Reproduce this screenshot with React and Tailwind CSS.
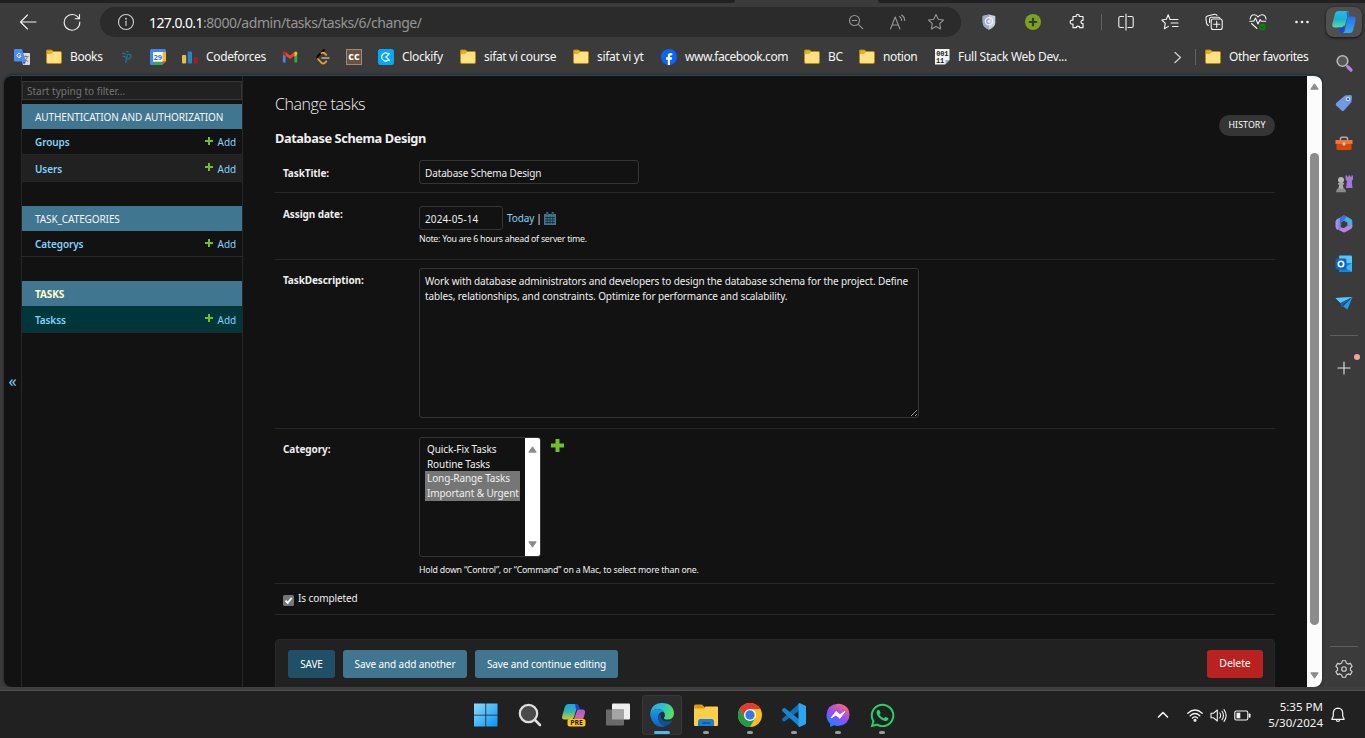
import React from "react";
import { FaWhatsapp } from "react-icons/fa";

const stroke = { fill: "none", stroke: "currentColor", strokeLinecap: "round", strokeLinejoin: "round" };

function Icon({ size = 18, vb = 18, className = "", children, sw = 1.1 }) {
  return (
    <svg width={size} height={size} viewBox={`0 0 ${vb} ${vb}`} className={`shrink-0 ${className}`} {...stroke} strokeWidth={sw}>
      {children}
    </svg>
  );
}

function Folder() {
  return (
    <svg width="16" height="16" viewBox="0 0 16 16" className="shrink-0">
      <path d="M.5 3V2q0-1 1-1h4l1.500 1.500H14q1.500 0 1.500 1.200V13q0 1.500-1.500 1.500H2Q.5 14.500.5 13z" fill="#ffe083" stroke="#b58a12" />
      <path d="M1 2.500Q1 1.500 2 1.500h3.300L6.600 2.700 5.300 4.300H1z" fill="#eeb81f" stroke="#b58a12" strokeWidth=".6" />
    </svg>
  );
}

/* ---------- browser toolbar ---------- */

function Slot({ children, className = "w-11" }) {
  return <div className={`flex shrink-0 items-center justify-center ${className}`}>{children}</div>;
}

function Toolbar() {
  return (
    <div className="flex h-9 shrink-0 items-center pt-[2px] text-[#f2f2f2]">
      <Slot className="ml-[6px] w-11">
        <Icon><path d="M17 9H1.500M8.500 2 1.500 9l7 7" /></Icon>
      </Slot>
      <Slot>
        <Icon><path d="M15.800 5.500A7.800 7.800 0 1 0 16.800 9M16.500 1.500v4.200h-4.300" /></Icon>
      </Slot>
      <div className="ml-[6px] flex h-[30px] w-[861px] items-center rounded-full bg-[#2b2b2b] pl-[17px]">
        <Icon className="text-[#cfcfcf]">
          <circle cx="9" cy="9" r="7.500" />
          <path d="M9 8.300v4.200" />
          <circle cx="9" cy="5.800" r=".4" />
        </Icon>
        <div className="ml-[14px] w-[679px] whitespace-pre text-[14px] tracking-[-0.43px] text-[#969696]">
          <span className="tracking-[-0.6px] text-white">127.0.0.1</span>:8000/admin/tasks/tasks/6/change/
        </div>
        <Slot className="ml-[6px] w-[44px] text-[#969696]">
          <Icon size={16} vb={16}><circle cx="6.500" cy="6.500" r="5" /><path d="M4.200 6.500h4.600M10.300 10.300l4.400 4.400" /></Icon>
        </Slot>
        <Slot className="w-[39px] text-[#969696]">
          <Icon size={17} vb={17}><path d="M1.500 15 6.200 3l4.700 12M3 11h6.500M10.500 2.500q2 1 2.200 4M12.500 1q3 1.500 3.200 5.500" /></Icon>
        </Slot>
        <Slot className="w-[38px] text-[#969696]">
          <Icon><path d="m9 1.500 2.300 4.800 5.200.7-3.800 3.700.9 5.200L9 13.400l-4.600 2.500.9-5.200L1.500 7l5.200-.7z" /></Icon>
        </Slot>
      </div>
      <Slot className="ml-[6px] w-11">
        <svg width="14" height="16" viewBox="0 0 14 16">
          <path d="M7 .5 13.300 2v6.500q0 4.500-6.300 7.300Q.7 13 .7 8.500V2z" fill="#c7cfe0" />
          <path d="M7 .5V15.800Q.7 13 .7 8.500V2z" fill="#9faac3" />
          <circle cx="7" cy="7.300" r="3.600" fill="none" stroke="#eef1f8" strokeWidth="1.300" />
          <circle cx="7" cy="7.300" r="1.500" fill="#e8ecf5" />
        </svg>
      </Slot>
      <Slot>
        <svg width="16" height="16" viewBox="0 0 16 16">
          <circle cx="8" cy="8" r="8" fill="#7ba223" />
          <path d="M8 3.800v8.400M3.800 8h8.400" stroke="#30400c" strokeWidth="2.200" />
        </svg>
      </Slot>
      <Slot>
        <Icon size={16} vb={16} sw={1.2}>
          <path d="M5 2.500h2.200q-.3-2 1.500-2t1.500 2H14v4q-2-.3-2 1.500t2 1.500v4.200h-3.500q.2-1.600-1.500-1.600t-1.500 1.600H4v-3.700q-2.800.3-2.800-2T4 6.200V2.500z" />
        </Icon>
      </Slot>
      <div className="mx-[2px] h-4 w-px bg-[#626262]" />
      <Slot>
        <Icon><path d="M6.500 3.500h-3Q1.800 3.500 1.800 5v8q0 1.500 1.700 1.500h3M11 3.500h3.500q1.700 0 1.700 1.500v8q0 1.500-1.700 1.500H11M9 1v16" /></Icon>
      </Slot>
      <Slot>
        <Icon>
          <path d="M10.500 6.500H9L7.200 1.800 5.300 6.300.8 7l3.500 3.400L3.400 15.800l4-2.400M11 6.500h6M10 10h7M11.500 13.500H17" />
        </Icon>
      </Slot>
      <Slot>
        <Icon>
          <path d="M3.500 12.500q-1.500-.5-1.900-2L.9 5.400Q.8 3.500 2.500 3l7-1.700q2-.2 2.500 1.200M4.600 9.500V6.200q0-2 2-2h6.600q1.700 0 1.900 1.600" />
          <rect x="6.200" y="6" width="11" height="10.500" rx="2" fill="#3b3b3b" />
          <path d="M11.700 8.200v6M8.700 11.200h6" />
        </Icon>
      </Slot>
      <Slot>
        <Icon>
          <path d="M1.200 6q.3-4.300 4-4.300Q7.700 1.700 9 4q1.400-2.300 4-2.300 3.600 0 4 4.300M2.500 10.500 8 15.500M.8 8.300h4L6.500 5 9 11l2.200-4.500 1 1.800h4.500" />
          <circle cx="13.500" cy="14" r="3.500" fill="#107c10" stroke="none" />
          <path d="m12 14 1.200 1.200 2-2.200" strokeWidth=".8" stroke="#064b06" />
        </Icon>
      </Slot>
      <Slot>
        <svg width="16" height="4" viewBox="0 0 16 4" fill="#f2f2f2">
          <circle cx="2.500" cy="2" r="1.300" /><circle cx="8" cy="2" r="1.300" /><circle cx="13.500" cy="2" r="1.300" />
        </svg>
      </Slot>
      <div className="ml-[2px] flex h-[30px] w-9 items-center justify-center rounded-lg bg-[#505050] shadow-[0_1px_3px_rgba(0,0,0,0.7)]">
        <svg width="26" height="24" viewBox="0 0 26 24">
          <defs>
            <linearGradient id="cpa" x1="0" y1="0" x2="0" y2="1"><stop stopColor="#2bb9e6" /><stop offset=".5" stopColor="#1cb0cf" /><stop offset="1" stopColor="#5ddc9a" /></linearGradient>
            <linearGradient id="cpb" x1="0" y1="0" x2="0" y2="1"><stop stopColor="#2870e8" /><stop offset="1" stopColor="#35a9f2" /></linearGradient>
          </defs>
          <path d="M7 1h9q2 0 1.500 2L14 15q-1 2.500-3.500 2.500H4q-3.500 0-2.500-4L4 3.500Q4.700 1 7 1z" fill="url(#cpa)" />
          <path d="M15.500 1.100q2 .3 3.400 5.400h-3z" fill="#1473c9" />
          <path d="M7 17.500h4l2-2-.5 7.500h-1Q9 22.800 7 17.500z" fill="#1548d8" />
          <path d="M16.500 6.500h5.500q3.500 0 2.500 4L22 20.500q-.8 2.500-3 2.500h-7q1.500-.5 2-3l2-11z" fill="url(#cpb)" />
        </svg>
      </div>
    </div>
  );
}

/* ---------- bookmarks ---------- */

function Mark({ icon, label, className }) {
  return (
    <div className={`flex shrink-0 items-center gap-2 whitespace-nowrap ${className}`}>
      {icon}
      {label && <span>{label}</span>}
    </div>
  );
}

const translateIcon = (
  <svg width="16" height="16" viewBox="0 0 16 16">
    <path d="M6 4h9q1 0 1 1v10q0 1-1 1H9z" fill="#dcdcdc" />
    <path d="M8.500 7.500h6M11.500 6.500v1M13.500 7.500q-.8 3-3.500 5M10 9q1 2.500 4 3.500" stroke="#70767c" fill="none" strokeWidth=".9" />
    <path d="M1 0h7l4 12.500H1q-1 0-1-1V1q0-1 1-1z" fill="#4c8bf5" />
    <path d="M6.700 5.300A2 2 0 1 0 7 7H5.200" stroke="#fff" fill="none" />
    <path d="m8.500 12.500 1.500 3.300 2-3.300z" fill="#2d5fc4" />
  </svg>
);
const pIcon = (
  <svg width="12" height="14" viewBox="0 0 12 14" fill="none" stroke="#23708f" strokeWidth="1.300">
    <path d="M1 3.500q2.500-.5 4 1M1.500 6.500q2-.5 3.500 1M4.500 13 6.500 4.500M6 5Q10.500 3.500 10 6.300 9.500 9 5.500 9.200M5 1.500q1.500-.5 2.500.8" />
  </svg>
);
const calendarIcon = (
  <svg width="16" height="16" viewBox="0 0 16 16">
    <path d="M1.500 0H14.500Q16 0 16 1.500V12l-4 4H1.500Q0 16 0 14.500v-13Q0 0 1.500 0z" fill="#4285f4" />
    <path d="M12.500 3H16v9.500h-3.500z" fill="#fbbc04" /><path d="M3 12.500h9.500V16H3z" fill="#34a853" />
    <path d="M12.500 12.500H16L12.500 16z" fill="#ea4335" /><path d="M3 3h9.700v9.700H3z" fill="#fff" />
    <text x="7.800" y="10.600" fontSize="7.500" fontWeight="700" textAnchor="middle" fill="#3674e0" fontFamily="Open Sans, sans-serif">29</text>
  </svg>
);
const barsIcon = (
  <svg width="16" height="16" viewBox="0 0 16 16">
    <rect x="0" y="6" width="4.200" height="8.500" rx="1" fill="#e8bd45" /><rect x="5.800" y="2.500" width="4.200" height="12" rx="1" fill="#1f86c9" /><rect x="11.700" y="8" width="4.200" height="6.500" rx="1" fill="#a9182a" />
  </svg>
);
const gmailIcon = (
  <svg width="16" height="12" viewBox="0 0 16 12">
    <path d="M1 1h2.600v10.500H1.500Q.8 11.500.8 10.700z" fill="#4285f4" /><path d="M12.400 1h2.800v9.700q0 .8-.8.800h-2z" fill="#34a853" />
    <path d="M.8 1.800Q1.300-.3 3.600 1L8 4.600 12.400 1v3.700L8 8.100 3.600 4.700.8 3.500z" fill="#ea4335" />
    <path d="M12.400 1q2.300-1.300 2.800.8v2l-2.800 2z" fill="#fbbc04" /><path d="M.8 1.800Q1.200.4 2.200.5l1.400.5v4.500L.8 3.500z" fill="#c5221f" />
  </svg>
);
const leetIcon = (
  <svg width="14" height="16" viewBox="0 0 14 16" fill="none" strokeLinecap="round" strokeWidth="1.800">
    <path d="M8 1 2 7q-1.500 1.500 0 3" stroke="#080808" /><path d="m2 10 3.500 3.800q1.700 1.500 3.300 0l1.500-1.500M5.500 4q1.700-.8 3 .3l1.700 1.500" stroke="#f0a129" /><path d="M6 9h7" stroke="#b3b3b3" strokeWidth="1.500" />
  </svg>
);
const ccIcon = (
  <svg width="16" height="16" viewBox="0 0 16 16">
    <rect x=".5" y=".5" width="15" height="15" fill="#6a5243" stroke="#a1897a" />
    <text x="8" y="11" fontSize="11" fontWeight="700" textAnchor="middle" fill="#fff" fontFamily="Open Sans, sans-serif">cc</text>
  </svg>
);
const clockifyIcon = (
  <svg width="16" height="16" viewBox="0 0 16 16">
    <rect width="16" height="16" rx="2.500" fill="#03a9f4" />
    <path d="M10 4.700A4 4 0 1 0 10 11.300M9 7.200 11.500 4.500M9 8.800l2.500 2.700" stroke="#fff" fill="none" strokeWidth="1.200" strokeLinecap="round" /><circle cx="8.200" cy="8" r=".9" fill="#fff" />
  </svg>
);
const facebookIcon = (
  <svg width="16" height="16" viewBox="0 0 16 16">
    <circle cx="8" cy="8" r="8" fill="#0866ff" />
    <path d="M6.800 16v-5.200H5V8.300h1.800V7q0-3 3-3 .8 0 1.500.2v2.100h-1q-1.300 0-1.300 1.100v.9h2.200l-.4 2.500H9V16z" fill="#fff" />
  </svg>
);
const binaryIcon = (
  <svg width="15" height="16" viewBox="0 0 15 16">
    <path d="M0 0h14.500v11L10 15.500H0z" fill="#f3f3f3" /><path d="M14.500 11H10.500v4.500z" fill="#9fb0b8" />
    <text x="7.200" y="6.800" fontSize="7" fontWeight="700" textAnchor="middle" fill="#222" fontFamily="Liberation Mono, monospace">001</text>
    <text x="1" y="13.500" fontSize="7" fontWeight="700" fill="#222" fontFamily="Liberation Mono, monospace">11</text>
  </svg>
);

function Bookmarks() {
  return (
    <div className="flex h-9 shrink-0 items-center pl-[14px] text-[12px] text-[#f5f5f5]">
      <Mark className="w-8" icon={translateIcon} />
      <Mark className="w-[75px] tracking-[-0.4px]" icon={<Folder />} label="Books" />
      <Mark className="w-[29px]" icon={pIcon} />
      <Mark className="w-8" icon={calendarIcon} />
      <Mark className="w-[100px] tracking-[-0.35px]" icon={barsIcon} label="Codeforces" />
      <Mark className="w-[34px]" icon={gmailIcon} />
      <Mark className="w-[30px]" icon={leetIcon} />
      <Mark className="w-8" icon={ccIcon} />
      <Mark className="w-[82px] tracking-[-0.35px]" icon={clockifyIcon} label="Clockify" />
      <Mark className="w-[113px] tracking-[-0.35px]" icon={<Folder />} label="sifat vi course" />
      <Mark className="w-[88px] tracking-[-0.3px]" icon={<Folder />} label="sifat vi yt" />
      <Mark className="w-[143px] tracking-[-0.45px]" icon={facebookIcon} label="www.facebook.com" />
      <Mark className="w-[55px] tracking-[-0.3px]" icon={<Folder />} label="BC" />
      <Mark className="w-[76px] tracking-[-0.4px]" icon={<Folder />} label="notion" />
      <Mark className="w-[236px] tracking-[-0.27px]" icon={binaryIcon} label="Full Stack Web Dev..." />
      <Icon size={13} vb={13} sw={1.3} className="text-[#cfcfcf]"><path d="M4 1.500 9.500 6.500 4 11.500" /></Icon>
      <div className="ml-[11px] mr-[9px] h-4 w-px bg-[#626262]" />
      <Mark className="w-[110px] tracking-[-0.38px]" icon={<Folder />} label="Other favorites" />
    </div>
  );
}

/* ---------- admin page ---------- */

function AddLink() {
  return (
    <a className="flex items-center gap-[5px] text-[#81d4fa]">
      <svg width="8" height="8" viewBox="0 0 8 8" className="mb-[4px]"><path d="M4 0v8M0 4h8" stroke="#70bf2b" strokeWidth="2" /></svg>
      Add
    </a>
  );
}

function NavRow({ label, className }) {
  return (
    <div className={`flex items-center justify-between border-b border-[#282828] pl-[13px] pr-[6px] pt-[2px] ${className}`}>
      <span className="font-semibold text-[#81d4fa]">{label}</span>
      <AddLink />
    </div>
  );
}

function NavHead({ label, className }) {
  return <div className={`flex h-[25px] items-center bg-[#417690] pl-[13px] pt-[2px] ${className}`}>{label}</div>;
}

function NavSidebar() {
  return (
    <div className="flex shrink-0">
      <div className="flex w-[17px] items-center justify-center text-[16px] text-[#81d4fa]">
        <span className="pb-[2px]">«</span>
      </div>
      <nav className="flex w-[222px] flex-col border-x border-[#282828] pt-[5px] text-[10px] tracking-[-0.1px]">
        <div className="mb-[4px] flex h-[19px] items-center border border-[#353535] bg-[#212121] pl-[4px] pt-[2px] tracking-normal text-[#757575]">Start typing to filter...</div>
        <NavHead label="AUTHENTICATION AND AUTHORIZATION" className="text-[#f5f5f5]" />
        <NavRow label="Groups" className="h-[26px]" />
        <NavRow label="Users" className="mb-[24px] h-[27px] bg-[#212121]" />
        <NavHead label="TASK_CATEGORIES" className="text-[#f5f5f5]" />
        <NavRow label="Categorys" className="mb-[24px] h-[26px]" />
        <NavHead label="TASKS" className="font-bold text-[#ffffcc]" />
        <NavRow label="Taskss" className="h-[27px] bg-[#00363a]" />
      </nav>
    </div>
  );
}

function FormRow({ label, className, labelClass, children }) {
  return (
    <div className={`flex shrink-0 border-b border-[#282828] pl-2 ${className}`}>
      <label className={`w-[136px] shrink-0 font-bold leading-[15px] text-[#eeeeee] ${labelClass}`}>{label}</label>
      {children}
    </div>
  );
}

function Btn({ label, className }) {
  return <button className={`h-7 rounded-[3px] text-white ${className}`}>{label}</button>;
}

function Triangle({ down }) {
  return (
    <svg width="9" height="7" viewBox="0 0 9 7" className="shrink-0">
      <path d={down ? "M.8.8h7.400L4.500 6.200z" : "M.8 6.200h7.400L4.500.8z"} fill="#8b8b8b" stroke="#8b8b8b" strokeLinejoin="round" />
    </svg>
  );
}

function Content() {
  return (
    <main className="ml-8 flex w-[1000px] shrink-0 flex-col text-[10px] tracking-[-0.1px] text-[#eeeeee]">
      <div className="flex h-[83px] shrink-0 justify-between">
        <div>
          <h1 className="mt-[17px] font-['Open_Sans'] text-[16px] font-light leading-[22px] tracking-[-0.42px]">Change tasks</h1>
          <h2 className="mt-[14px] text-[12.800px] font-bold leading-[18px] tracking-[-0.42px]">Database Schema Design</h2>
        </div>
        <a className="mt-[39px] flex h-[21px] w-14 items-center justify-center rounded-full bg-[#353535] text-[8.800px] tracking-[0.1px] text-white">HISTORY</a>
      </div>
      <FormRow label="TaskTitle:" className="h-[34px]" labelClass="pt-[7px]">
        <input defaultValue="Database Schema Design" className="mt-[1px] h-6 w-[220px] rounded-[3px] border border-[#353535] bg-[#121212] px-[5px] pt-[1px] tracking-[-0.13px] text-[#eeeeee]" />
      </FormRow>
      <FormRow label="Assign date:" className="h-[67px]" labelClass="pt-[14px]">
        <div className="pt-[13px]">
          <div className="flex items-center">
            <input defaultValue="2024-05-14" className="h-6 w-[84px] rounded-[3px] border border-[#353535] bg-[#121212] px-[5px] pt-[1px] tracking-[0.12px] text-[#eeeeee]" />
            <span className="ml-[4px] text-[#81d4fa]">Today</span>
            <span className="ml-[2px]">|</span>
            <svg width="12" height="13" viewBox="0 0 12 13" className="ml-[2px]">
              <path d="M0 2h12v11H0z" fill="#417690" />
              <path d="M1 5.500h10M1 8h10M1 10.500h10M3.200 4.500V12M6 4.500V12M8.800 4.500V12" stroke="#16242c" strokeWidth=".7" />
              <path d="M3.300 0v3.200M8.700 0v3.200" stroke="#417690" strokeWidth="2" />
              <path d="M3.300 1v2.200M8.700 1v2.200" stroke="#16242c" strokeWidth=".6" />
            </svg>
          </div>
          <div className="mt-[2px] text-[8.800px] leading-[14px] tracking-[-0.27px]">Note: You are 6 hours ahead of server time.</div>
        </div>
      </FormRow>
      <FormRow label="TaskDescription:" className="h-[169px]" labelClass="pt-[13px]">
        <textarea
          className="mt-2 h-[150px] w-[500px] rounded-[3px] border border-[#353535] bg-[#121212] px-[5px] py-[5px] leading-[14.500px] tracking-[-0.11px] text-[#eeeeee]"
          defaultValue="Work with database administrators and developers to design the database schema for the project. Define tables, relationships, and constraints. Optimize for performance and scalability."
        />
      </FormRow>
      <FormRow label="Category:" className="h-[155px]" labelClass="pt-[13px]">
        <div className="pt-2">
          <div className="flex">
            <div className="flex h-[120px] w-[122px] justify-between overflow-hidden rounded-[3px] border border-[#353535]">
              <div className="ml-[5px] mt-[4px] w-[95px] whitespace-nowrap leading-[14.700px]">
                <div className="pl-[2px]">Quick-Fix Tasks</div>
                <div className="pl-[2px]">Routine Tasks</div>
                <div className="bg-[#767676] pl-[2px]">Long-Range Tasks</div>
                <div className="bg-[#767676] pl-[2px]">Important &amp; Urgent</div>
              </div>
              <div className="flex w-[15px] flex-col items-center justify-between bg-white py-2"><Triangle /><Triangle down /></div>
            </div>
            <svg width="13" height="13" viewBox="0 0 13 13" className="ml-[10px] mt-[2px]"><path d="M6.500 0v13M0 6.500h13" stroke="#70bf2b" strokeWidth="4" /></svg>
          </div>
          <div className="mt-[6px] text-[8.800px] leading-[14px] tracking-[-0.21px]">Hold down “Control”, or “Command” on a Mac, to select more than one.</div>
        </div>
      </FormRow>
      <div className="flex h-[31px] shrink-0 items-start border-b border-[#282828] pl-2 pt-[7px]">
        <svg width="11" height="11" viewBox="0 0 11 11" className="mt-[4px]">
          <rect width="11" height="11" rx="1.500" fill="#767676" /><path d="m2.500 5.700 2.200 2.200 4-5" stroke="#fff" strokeWidth="1.700" fill="none" />
        </svg>
        <span className="ml-[4px] leading-[15px]">Is completed</span>
      </div>
      <div className="mt-6 flex h-[60px] shrink-0 gap-2 rounded-t-[4px] border border-[#282828] bg-[#212121] px-[12px] pt-[10px]">
        <Btn label="SAVE" className="w-[47px] bg-[#205067]" />
        <Btn label="Save and add another" className="w-[124px] bg-[#417690]" />
        <Btn label="Save and continue editing" className="w-[143px] bg-[#417690]" />
        <Btn label="Delete" className="ml-auto mr-[-1px] w-14 bg-[#ba2121] text-[10.500px]" />
      </div>
    </main>
  );
}

function AdminPage() {
  return (
    <div className="ml-1 flex h-[612px] w-[1318px] shrink-0 overflow-hidden rounded-lg border-t border-[#244553] bg-[#121212] shadow-[0_0_3px_rgba(0,0,0,0.5)]">
      <NavSidebar />
      <Content />
      <div className="-mt-px ml-auto flex h-[612px] w-[15px] shrink-0 flex-col items-center bg-[#fcfcfc] pt-2">
        <Triangle />
        <div className="mb-[47px] mt-[63px] w-[9px] grow rounded-full bg-[#8b8b8b]" />
        <div className="mt-auto flex h-[15px] shrink-0 items-start"><Triangle down /></div>
      </div>
    </div>
  );
}

/* ---------- edge side rail ---------- */

function SideRail() {
  return (
    <aside className="flex w-[43px] shrink-0 flex-col items-center pt-[14px]">
      <svg width="20" height="20" viewBox="0 0 20 20">
        <circle cx="8.500" cy="8" r="5.300" fill="#555" stroke="#b9b9b9" strokeWidth="1.600" /><path d="m12.500 12.500 1.500 1.500" stroke="#aaa" strokeWidth="1.800" /><path d="m14 14 3 3" stroke="#b682e8" strokeWidth="3.200" strokeLinecap="round" />
      </svg>
      <svg width="20" height="20" viewBox="0 0 20 20" className="mt-[20px]">
        <path d="M11 2.500 16.500 2q1.500 0 1.500 1.500L17.500 9 10 17.500q-1.200 1-2.400 0L2.200 12.500q-1-1.200 0-2.400z" fill="#6d9be8" /><circle cx="14" cy="6" r="2.200" fill="#c9d9f3" /><circle cx="14" cy="6" r="1" fill="#33405a" />
      </svg>
      <svg width="20" height="20" viewBox="0 0 20 20" className="mt-[21px]">
        <path d="M6.500 6.500V4.500q0-1.200 1.200-1.200h4.600q1.200 0 1.200 1.200v2" stroke="#a9a9a9" strokeWidth="1.600" fill="none" />
        <path d="M1.500 6h17v4h-17z" fill="#f07830" /><path d="M2.500 9.800h15v5q0 1.200-1.200 1.200H3.700q-1.200 0-1.200-1.200z" fill="#d9480f" /><rect x="8.700" y="8.500" width="2.600" height="3" rx="1" fill="#ddd" />
      </svg>
      <svg width="20" height="20" viewBox="0 0 20 20" className="mt-[20px]">
        <path d="M11.500 1.500h1.700v1.300h1.200V1.500h1.800v1.300h1.200V1.500H19v4l-1.200 1.500.7 7H12l1-7-1.500-1.500z" fill="#a477d8" />
        <circle cx="7" cy="6" r="3" fill="#b6b6b6" /><path d="M4 9h6v1.500H8.800l1 5H4.200l1-5H4z" fill="#a8a8a8" /><path d="M3 14.800h8l1 3.500H2z" fill="#8b8b8b" />
      </svg>
      <svg width="20" height="20" viewBox="0 0 20 20" className="mt-[20px]">
        <path d="M10 1.500 3 5.200Q1.700 6 1.700 7.500v5q0 1.500 1.300 2.200l2.500 1.500q1.300.3 1.300-1.200V6z" fill="#7d8be6" />
        <path d="M10 1.500 5.500 4Q4 5 4 7v9l-1-.5q-1.300-.8-1.300-2.500V7.500Q1.700 6 3 5.200z" fill="#a98ee6" />
        <path d="M8.300 2Q10 1.200 11.700 2L17 5q1.300.8 1.300 2.300v5.200l-5-1V8.500L10 6.700 7 8.300z" fill="#49aee6" />
        <path d="M10 1.300 6 3.700v8l1.300-1V8l3-1.700 2.200-4z" fill="#3f6fd6" />
        <path d="m5 16 2-2.500 3 .5 3.300-2.300 5-1v2q0 1.500-1.300 2.300L11.500 18q-1.500.8-2.800 0z" fill="#b982dc" />
      </svg>
      <svg width="20" height="20" viewBox="0 0 20 20" className="mt-[20px]">
        <rect x="5" y="1.500" width="13" height="10" rx="1" fill="#50c8f5" /><path d="M5 9h13v8q0 1-1 1H5z" fill="#1585d8" /><path d="m18 9-7 4.500 6.500 4.300q.5-.3.500-1z" fill="#3bb4ee" />
        <rect x="1.500" y="4.500" width="11" height="11" rx="1.500" fill="#0b66c0" /><circle cx="7" cy="10" r="2.700" fill="none" stroke="#fff" strokeWidth="1.600" />
      </svg>
      <svg width="20" height="20" viewBox="0 0 20 20" className="mt-[19px]">
        <path d="M1.500 5 18.500 4 13.500 16.500 9 13.500 18.500 4 6.500 10z" fill="#209ce8" /><path d="M1.500 5 18.500 4 6.500 10z" fill="#58c8f5" /><path d="M6.500 10 18.500 4 9 12l-1.500 3.500z" fill="#0f64b0" />
      </svg>
      <div className="mt-[22px] h-px w-7 shrink-0 bg-[#5e5e5e]" />
      <div className="relative mt-[25px] h-[14px] w-[14px] shrink-0 text-[#e5e5e5]">
        <Icon size={14} vb={14}><path d="M7 1v12M1 7h12" /></Icon>
        <div className="absolute -top-[7px] left-[17px] h-[6px] w-[6px] rounded-full bg-[#f7a093]" />
      </div>
      <div className="mt-auto h-px w-7 shrink-0 bg-[#5e5e5e]" />
      <Icon size={20} vb={20} className="mb-[8px] mt-[12px] text-[#d5d5d5]">
        <path d="M8.300 1.800h3.400l.6 2.300 1.800 1 2.300-.7 1.700 2.900-1.700 1.700v2l1.700 1.700-1.700 2.900-2.300-.7-1.800 1-.6 2.300H8.300l-.6-2.300-1.800-1-2.300.7-1.700-2.900L3.600 11V9L1.900 7.300l1.700-2.900 2.300.7 1.800-1z" /><circle cx="10" cy="10" r="2.300" />
      </Icon>
    </aside>
  );
}

/* ---------- windows taskbar ---------- */

function Task({ children, state }) {
  return (
    <div className={`flex h-10 w-10 flex-col items-center rounded ${state === "active" ? "bg-[#2d2d2d] ring-1 ring-inset ring-[#383838]" : ""}`}>
      <div className="flex h-[36px] items-center pt-[4px]">{children}</div>
      {state && <div className={`h-[3px] rounded-full ${state === "active" ? "w-4 bg-[#4cb9f2]" : "w-[6px] bg-[#9a9a9a]"}`} />}
    </div>
  );
}

function Taskbar() {
  return (
    <footer className="flex h-[47px] shrink-0 items-start bg-[#212121] pt-[4px]">
      <div className="ml-[466px] flex gap-1">
        <Task>
          <svg width="24" height="24" viewBox="0 0 24 24">
            <defs><linearGradient id="wi" x1="0" y1="0" x2="1" y2="1"><stop stopColor="#8adcfa" /><stop offset="1" stopColor="#0a93f5" /></linearGradient></defs>
            <path d="M0 .5h11.400v11.200H0zM12.200.5h11.300v11.200H12.200zM0 12.500h11.400v11H0zM12.200 12.500h11.300v11H12.200z" fill="url(#wi)" />
          </svg>
        </Task>
        <Task>
          <svg width="24" height="24" viewBox="0 0 24 24">
            <circle cx="10.500" cy="10.500" r="8.700" fill="#4a4a4a" stroke="#dedede" strokeWidth="2.200" /><path d="m17 17 5 5" stroke="#dedede" strokeWidth="2.600" strokeLinecap="round" />
          </svg>
        </Task>
        <Task>
          <svg width="26" height="26" viewBox="0 0 26 26">
            <defs>
              <linearGradient id="pa" x1="0" y1="0" x2="0" y2="1"><stop stopColor="#1e9ff0" /><stop offset=".5" stopColor="#31b9a5" /><stop offset="1" stopColor="#d8c82d" /></linearGradient>
              <linearGradient id="pb" x1="0" y1="0" x2="0" y2="1"><stop stopColor="#a45de0" /><stop offset="1" stopColor="#f26a7c" /></linearGradient>
            </defs>
            <path d="M7 2h8q2 0 1.500 2L13 15q-1 2.500-3 2.500H3.500Q.5 17.500 1.200 14L4 4.500Q5 2 7 2z" fill="url(#pa)" /><path d="M14 2h2q2 .5 3 5.500h-4z" fill="#2342c8" />
            <path d="M16.500 7.500h5q3 0 2.500 3.500l-3 10h-9.500z" fill="url(#pb)" /><rect x="6.500" y="17" width="18" height="7.500" rx="2" fill="#ffc80a" />
            <text x="15.500" y="23.200" fontSize="6.800" fontWeight="700" textAnchor="middle" fill="#241a00" fontFamily="Open Sans, sans-serif">PRE</text>
          </svg>
        </Task>
        <Task>
          <svg width="24" height="24" viewBox="0 0 24 24"><rect x="6" y=".5" width="18" height="16" rx="1" fill="#eee" /><rect x="0" y="6.500" width="18" height="16" rx="1" fill="#6a6a6a" /><path d="M6 6.500h12v10H6z" fill="#a5a5a5" /></svg>
        </Task>
        <Task state="active">
          <svg width="24" height="24" viewBox="0 0 24 24">
            <defs>
              <linearGradient id="ea" x1="0" y1=".3" x2="1" y2=".5"><stop stopColor="#2aa5e0" /><stop offset=".5" stopColor="#2bc3d2" /><stop offset="1" stopColor="#5fe052" /></linearGradient>
              <linearGradient id="eb" x1="0" y1="0" x2="0" y2="1"><stop stopColor="#1b9de2" /><stop offset="1" stopColor="#1060c0" /></linearGradient>
            </defs>
            <path d="M.2 11.500Q1 .2 12 0q11.500.2 12 10.500-.3 6-6.500 6-4 0-3.500-2 1.700-1.700.5-4.500Q12 6 7.500 6 2.500 6 .2 11.500z" fill="url(#ea)" />
            <path d="M.1 12Q1 6.500 7.500 6q4 .2 6.500 2.800-5.500-.3-5.800 5.700.3 6 6 8.500.8.500-.2.700Q3 25.500.1 12z" fill="url(#eb)" />
            <path d="M8.100 13q-.3 9.500 8 10 4.200-1.500 6-5 0-1-1-.5-3.600 1.600-7.500.2Q10.300 16 11 11.500 8.500 10.500 8.100 13z" fill="#124f94" />
          </svg>
        </Task>
        <Task state="open">
          <svg width="24" height="24" viewBox="0 0 24 24">
            <path d="M0 3q0-1.500 1.500-1.500H8l2.300 2.300V9H0z" fill="#dc9a10" /><path d="M0 5.500h9.500L11.500 3.500H23q1 0 1 1V22q0 1-1 1H1q-1 0-1-1z" fill="#fccf4a" />
            <path d="M4 23v-4.500Q4 16 6.500 16h11q2.500 0 2.500 2.500V23z" fill="#1b7fd0" /><path d="M8 21v-1q0-1 1-1h6q1 0 1 1v1z" fill="#125ba5" />
          </svg>
        </Task>
        <Task state="open">
          <svg width="24" height="24" viewBox="0 0 24 24">
            <circle cx="12" cy="12" r="12" fill="#fbc116" /><path d="M1.600 6A12 12 0 0 1 22.400 6H12L6.800 15z" fill="#e33b2e" /><path d="M1.600 6A12 12 0 0 0 12 24l5.200-9H6.800z" fill="#229a47" />
            <circle cx="12" cy="12" r="6" fill="#fff" /><circle cx="12" cy="12" r="4.700" fill="#3578e8" />
          </svg>
        </Task>
        <Task state="open">
          <svg width="24" height="24" viewBox="0 0 24 24">
            <path d="m17.500 0 .5 7L2.500 18.500Q1.500 19 .5 17.500q-1-1 0-2z" fill="#0f70b8" /><path d="M.5 6q1-1.500 2.300-1L18 17l-.5 7L.5 8.300q-1-1 0-2.300z" fill="#1487d4" /><path d="M17.500 0 24 3v18l-6.500 3q-1 0-1-1V1z" fill="#2aa5f0" />
          </svg>
        </Task>
        <Task state="open">
          <svg width="24" height="24" viewBox="0 0 24 24">
            <defs><linearGradient id="me" x1=".2" y1="1" x2=".8" y2="0"><stop stopColor="#0a8bff" /><stop offset=".5" stopColor="#9a4bfa" /><stop offset="1" stopColor="#ff6a70" /></linearGradient></defs>
            <path d="M12 .8Q23.300 1.500 23.500 12 23 22 12 23q-2.300 0-4-.7L5 23.700q-.8.200-.9-.7v-2.400Q.5 17.300.5 12 1 1.500 12 .8z" fill="url(#me)" /><path d="m5 15 5-6.500 4 3.200 5-3.400-5 7-4-3.300z" fill="#fff" stroke="#fff" strokeLinejoin="round" />
          </svg>
        </Task>
        <Task state="open"><FaWhatsapp size={27} color="#25d366" /></Task>
      </div>
      <div className="ml-auto flex h-10 items-center text-[#f3f3f3]">
        <Icon size={12} vb={12} sw={1.6} className="mr-[18px]"><path d="m1.500 8 4.500-4.500L10.500 8" /></Icon>
        <Icon size={16} vb={16} sw={1.3}><path d="M.8 6.300q7.200-6.500 14.400 0M3.200 8.700q4.800-4.300 9.600 0M5.500 11q2.500-2.200 5 0" /><circle cx="8" cy="13.200" r=".9" fill="currentColor" /></Icon>
        <Icon size={17} vb={17} className="ml-[7px]"><path d="M1 6.300h2.300L7.300 3v11l-4-3.300H1zM9.800 6q1.700 2.500 0 5M12 4.300q3 4.200 0 8.400M14 2.700q4.300 5.800 0 11.600" /></Icon>
        <Icon size={17} vb={17} className="ml-[7px]"><rect x=".8" y="4" width="13" height="9" rx="1.500" /><path d="M2.500 5.700h3.800v5.600H2.500z" fill="currentColor" stroke="none" /><path d="M15.600 7.300v2.500" strokeWidth="1.800" /></Icon>
        <div className="ml-[7px] w-[65px] whitespace-nowrap text-right text-[11.500px] leading-4 tracking-[0.02px]">
          <div>5:35 PM</div>
          <div>5/30/2024</div>
        </div>
        <Icon size={16} vb={16} sw={1.2} className="ml-[7px] mr-[19px]"><path d="M1.800 12.300 3.300 9V6q.3-4.700 4.700-4.800 4.400.1 4.700 4.800v3l1.500 3.300zM6.200 12.500q.3 2 1.800 2t1.800-2" /></Icon>
      </div>
    </footer>
  );
}

export default function App() {
  return (
    <div className="flex h-[738px] w-[1365px] flex-col overflow-hidden bg-[#3b3b3b] font-['Noto_Sans','Open_Sans',sans-serif]">
      <div className="flex h-[3px] shrink-0 justify-between">
        <div className="w-[735px] rounded-br-[4px] bg-[#212121]" />
        <div className="w-[487px] rounded-bl-[4px] bg-[#212121]" />
      </div>
      <Toolbar />
      <div className="flex h-[648px] shrink-0">
        <div className="flex w-[1322px] shrink-0 flex-col">
          <Bookmarks />
          <AdminPage />
        </div>
        <SideRail />
      </div>
      <div className="h-[4px] shrink-0 border-b border-[#505050] bg-[#3f3f3f]" />
      <Taskbar />
    </div>
  );
}
